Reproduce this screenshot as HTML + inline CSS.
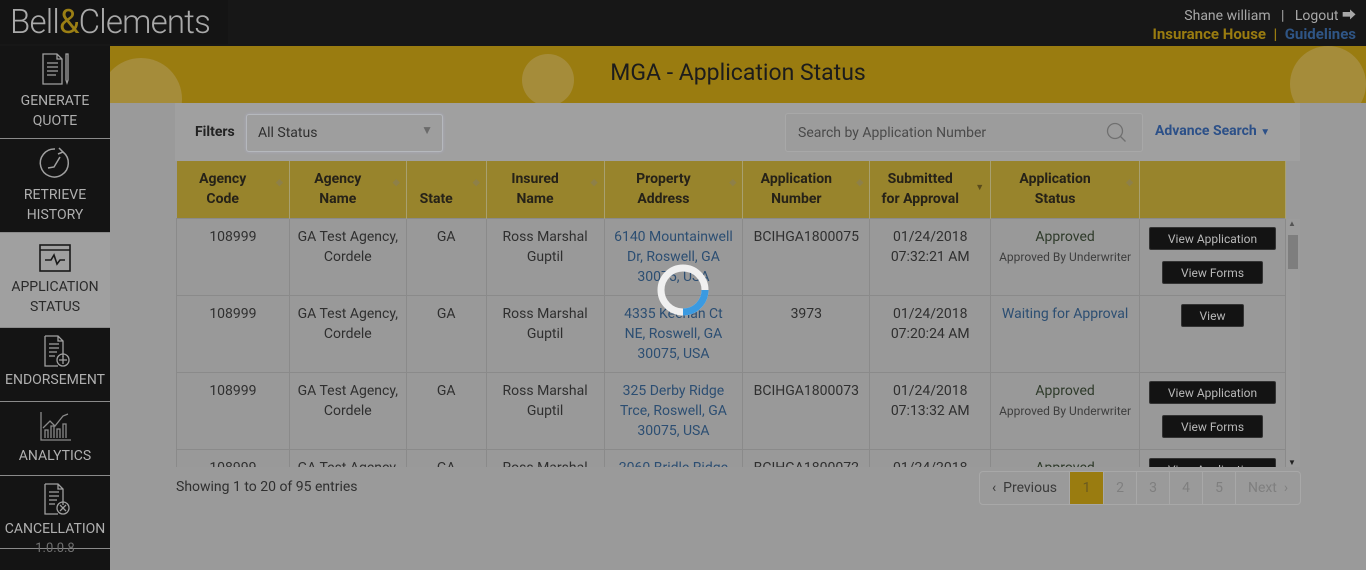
<!DOCTYPE html>
<html><head><meta charset="utf-8"><style>
*{margin:0;padding:0;box-sizing:border-box}
body{width:1366px;height:570px;overflow:hidden;background:#9a9a9a;font-family:"Roboto","Liberation Sans",sans-serif;position:relative;color:#2c2c2c}
.top{position:absolute;left:0;top:0;width:1366px;height:46px;background:#171717}
.logo{position:absolute;left:0;top:0;width:228px;height:44px;background:#141414;color:#a9a9a9;font-size:33px;font-weight:300;padding-left:10px;line-height:46px;letter-spacing:-0.8px}
.logo b{color:#9b7f14;font-weight:400}
.tr1{position:absolute;right:10px;top:5px;font-size:14px;color:#a8a8a8}
.tr2{position:absolute;right:10px;top:25px;font-size:15px;font-weight:bold;color:#9a7c10}
.tr2 span{color:#2f5585}
.side{position:absolute;left:0;top:46px;width:110px;height:524px;background:#141414}
.it{position:absolute;left:0;width:110px;color:#b0b0b0;font-size:14px;text-align:center;line-height:20px;border-bottom:1px solid #8a8a8a}
.it svg{display:block;margin:0 auto 0}
.act{background:#a0a0a0;color:#2a2a2a}
.band{position:absolute;left:110px;top:46px;width:1256px;height:57px;background:#9a7c10;overflow:hidden}
.circ{position:absolute;border-radius:50%;background:rgba(180,160,110,0.45)}
.title{position:absolute;left:0;width:1256px;text-align:center;top:13px;font-size:23px;color:#1c1c1c}
.fbar{position:absolute;left:175px;top:103px;width:1125px;height:58px;background:#a0a0a0}
.sel{position:absolute;left:246px;top:114px;width:197px;height:38px;border:1px solid #b5b8bd;border-radius:3px;background:#9e9e9e;box-shadow:0 0 3px #aab;font-size:14px;color:#2f2f2f;padding:10px 11px}
.srch{position:absolute;left:785px;top:113px;width:358px;height:39px;border:1px solid #a8a8a8;border-radius:3px;background:#9c9c9c;font-size:14px;color:#4a4a4a;padding:11px 12px}
table{position:absolute;left:176px;top:161px;border-collapse:collapse;table-layout:fixed}
th{background:#98842c;height:57px;font-size:14px;color:#262218;font-weight:bold;line-height:20px;border-right:1px solid #a8a070;vertical-align:middle;padding-right:20px;position:relative}
th i{position:absolute;right:6px;top:12px;font-style:normal;font-size:9px;color:#8e8048}
td{height:77px;font-size:14px;line-height:20px;text-align:center;vertical-align:top;padding-top:8px;border:1px solid #8a8a8a;color:#2f2f2f;background:#999}
.l{color:#2c4e72}
.ap{color:#2e3a2a}
.sm{font-size:12px;color:#3e3e3e}
.btn{display:inline-block;background:#131313;color:#b8b8b8;font-size:12px;height:23px;line-height:22px;border-radius:2px;border:1px solid #333}
.wrap{position:absolute;left:176px;top:161px;width:1110px;height:306px;overflow:hidden}
.sb{position:absolute;left:1286px;top:219px;width:14px;height:248px;background:#9c9c9c}
.pg{position:absolute;left:979px;top:471px;width:322px;height:34px;border:1px solid #a8a8a8;border-radius:4px;display:flex;font-size:14px;color:#3a3a3a;overflow:hidden}
.pg div{line-height:32px;border-right:1px solid #a8a8a8;color:#7f7f7f;text-align:center}
</style></head><body>
<div class="top"><div class="logo">Bell<b>&amp;</b>Clements</div>
<div class="tr1">Shane william &nbsp;&nbsp;| &nbsp;&nbsp;Logout ⮕</div>
<div class="tr2">Insurance House &nbsp;<span style="color:#9a7c10">|</span>&nbsp; <span>Guidelines</span></div></div>
<div class="side">
<div class="it" style="top:0;height:93px;padding-top:6px"><svg width="34" height="34" viewBox="0 0 34 34" fill="none" stroke="#a0a0a0" stroke-width="1.3"><path d="M5 2h14l5 5v25H5z M19 2v5h5"/><path d="M9 11h11M9 15h11M9 19h11M9 23h9"/><path d="M28 2v26l1 3 1-3V2z"/></svg><div style="margin-top:5px">GENERATE<br>QUOTE</div></div>
<div class="it" style="top:94px;height:93px;padding-top:6px"><svg width="34" height="34" viewBox="0 0 34 34" fill="none" stroke="#a0a0a0" stroke-width="1.5"><path d="M25 6A14 14 0 1 1 17 3"/><path d="M21 2l4 4-5 2M10 22l6-1 6-10"/></svg><div style="margin-top:5px">RETRIEVE<br>HISTORY</div></div>
<div class="it act" style="top:187px;height:95px;padding-top:10px"><svg width="34" height="30" viewBox="0 0 34 30" fill="none" stroke="#1a1a1a" stroke-width="1.6"><rect x="2" y="2" width="30" height="26"/><path d="M2 7h30M7 17h6l3-5 3 9 3-4h5"/></svg><div style="margin-top:4px">APPLICATION<br>STATUS</div></div>
<div class="it" style="top:282px;height:74px;padding-top:6px"><svg width="34" height="34" viewBox="0 0 34 34" fill="none" stroke="#a0a0a0" stroke-width="1.3"><path d="M7 2h13l5 5v16M7 2v30h13M20 2v5h5M11 10h10M11 14h10M11 18h8M11 22h6"/><circle cx="25" cy="26" r="6"/><path d="M25 22v8M21 26h8"/></svg><div style="margin-top:2px">ENDORSEMENT</div></div>
<div class="it" style="top:356px;height:74px;padding-top:8px"><svg width="34" height="32" viewBox="0 0 34 32" fill="none" stroke="#8a8a8a" stroke-width="1.3"><path d="M3 2v28h30M7 28v-8h3v8M13 28v-12h3v12M19 28v-9h3v9M25 28v-14h3v14M5 18l7-7 5 5 8-10 5-2"/></svg><div style="margin-top:4px">ANALYTICS</div></div>
<div class="it" style="top:430px;height:73px;padding-top:6px"><svg width="34" height="34" viewBox="0 0 34 34" fill="none" stroke="#a0a0a0" stroke-width="1.3"><path d="M7 2h13l5 5v16M7 2v30h13M20 2v5h5M11 10h10M11 14h10M11 18h8M11 22h6"/><circle cx="25" cy="26" r="6"/><path d="M22 23l6 6M28 23l-6 6"/></svg><div style="margin-top:3px">CANCELLATION</div><div style="position:absolute;top:63px;width:110px;color:#707070;font-size:13px">1.0.0.8</div></div>
</div>
<div class="band"><div class="circ" style="left:-10px;top:12px;width:82px;height:82px"></div><div class="circ" style="left:412px;top:8px;width:52px;height:52px"></div><div class="circ" style="left:1180px;top:0;width:76px;height:76px"></div><div class="title">MGA - Application Status</div></div>
<div class="fbar"><div style="position:absolute;left:20px;top:21px;font-size:14px;font-weight:bold;color:#222">Filters</div><div style="position:absolute;left:980px;top:20px;font-size:14px;font-weight:bold;color:#2c5088">Advance Search <span style="font-size:10px">▼</span></div></div>
<div class="sel">All Status<span style="position:absolute;right:9px;top:8px;color:#6a6a6a;font-size:12px">▼</span></div>
<div class="srch">Search by Application Number<svg style="position:absolute;right:14px;top:8px" width="22" height="22" fill="none" stroke="#707070" stroke-width="1.3"><circle cx="9" cy="9" r="7.5"/><path d="M14.5 14.5l5 5"/></svg></div>
<div class="wrap"><table style="left:0;top:0">
<colgroup><col style="width:113px"><col style="width:117px"><col style="width:80px"><col style="width:118px"><col style="width:139px"><col style="width:127px"><col style="width:121px"><col style="width:149px"><col style="width:146px"></colgroup>
<tr><th>Agency<br>Code<i>◆</i></th><th>Agency<br>Name<i>◆</i></th><th><br>State<i>◆</i></th><th>Insured<br>Name<i>◆</i></th><th>Property<br>Address<i>◆</i></th><th>Application<br>Number<i>◆</i></th><th>Submitted<br>for Approval<i style="top:17px;color:#5a4c1c">▼</i></th><th>Application<br>Status<i>◆</i></th><th></th></tr>
<tr><td>108999</td><td>GA Test Agency,<br>Cordele</td><td>GA</td><td>Ross Marshal<br>Guptil</td><td class="l">6140 Mountainwell<br>Dr, Roswell, GA<br>30075, USA</td><td>BCIHGA1800075</td><td>01/24/2018<br>07:32:21 AM</td><td><span class="ap">Approved</span><br><span class="sm">Approved By Underwriter</span></td><td><span class="btn" style="width:127px">View Application</span><br><span class="btn" style="width:101px;margin-top:11px">View Forms</span></td></tr>
<tr><td>108999</td><td>GA Test Agency,<br>Cordele</td><td>GA</td><td>Ross Marshal<br>Guptil</td><td class="l">4335 Keenan Ct<br>NE, Roswell, GA<br>30075, USA</td><td>3973</td><td>01/24/2018<br>07:20:24 AM</td><td class="l">Waiting for Approval</td><td><span class="btn" style="width:63px">View</span></td></tr>
<tr><td>108999</td><td>GA Test Agency,<br>Cordele</td><td>GA</td><td>Ross Marshal<br>Guptil</td><td class="l">325 Derby Ridge<br>Trce, Roswell, GA<br>30075, USA</td><td>BCIHGA1800073</td><td>01/24/2018<br>07:13:32 AM</td><td><span class="ap">Approved</span><br><span class="sm">Approved By Underwriter</span></td><td><span class="btn" style="width:127px">View Application</span><br><span class="btn" style="width:101px;margin-top:11px">View Forms</span></td></tr>
<tr><td>108999</td><td>GA Test Agency,<br>Cordele</td><td>GA</td><td>Ross Marshal<br>Guptil</td><td class="l">2060 Bridle Ridge</td><td>BCIHGA1800072</td><td>01/24/2018</td><td><span class="ap">Approved</span></td><td><span class="btn" style="width:127px">View Application</span></td></tr>
</table></div>
<div class="sb"><div style="position:absolute;left:2px;top:16px;width:10px;height:34px;background:#7e7e7e"></div><div style="position:absolute;left:2px;top:0;font-size:8px;color:#555">▲</div><div style="position:absolute;left:2px;bottom:0;font-size:8px;color:#222">▼</div></div>
<div style="position:absolute;left:176px;top:479px;font-size:14px;color:#2f2f2f">Showing 1 to 20 of 95 entries</div>
<div class="pg"><div style="color:#3a3a3a;width:90px">‹ &nbsp;Previous</div><div style="background:#9a7c10;color:#6a5a20;width:34px">1</div><div style="width:33px">2</div><div style="width:33px">3</div><div style="width:33px">4</div><div style="width:33px">5</div><div style="border:none;width:64px">Next &nbsp;›</div></div>
<svg style="position:absolute;left:655px;top:262px" width="56" height="56" viewBox="0 0 56 56"><circle cx="28" cy="28" r="22" fill="none" stroke="#f0f0f0" stroke-width="7"/><path d="M50 28A22 22 0 0 1 28 50" fill="none" stroke="#3b9ae1" stroke-width="7"/></svg>
</body></html>
